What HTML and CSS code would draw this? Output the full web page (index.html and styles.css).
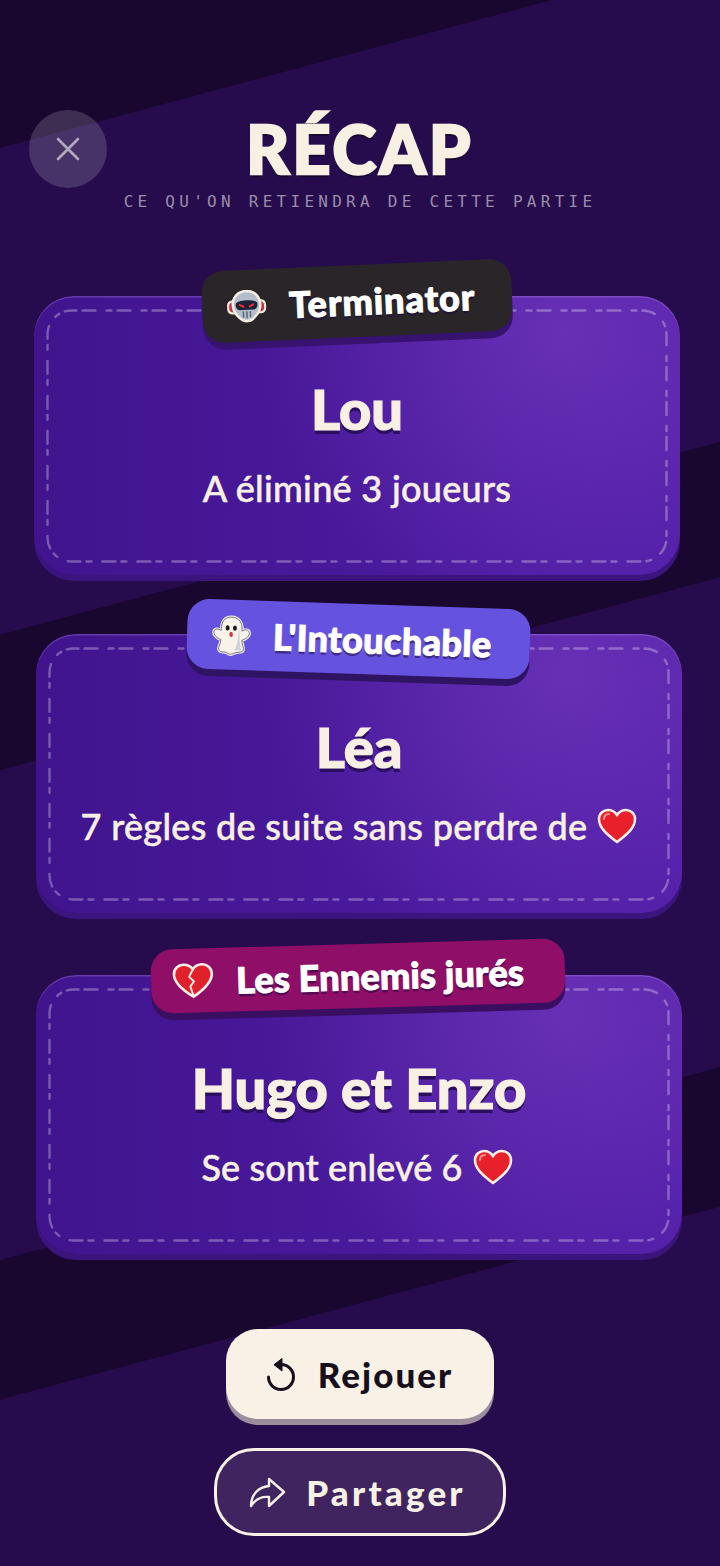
FILE: index.html
```html
<!DOCTYPE html>
<html lang="fr">
<head>
    <meta charset="UTF-8">
    <meta name="viewport" content="width=device-width, initial-scale=1.0">
    <title>Récap</title>
    <link rel="stylesheet" href="styles.css">
</head>
<body>
    <div class="page">
        <header class="recap-header">
            <button class="close-btn" aria-label="Fermer">
                <svg width="24" height="24" viewBox="0 0 24 24"><path d="M2 2 22 22M22 2 2 22" fill="none" stroke="#b3a8bd" stroke-width="2.6" stroke-linecap="round"/></svg>
            </button>
            <h1>RÉCAP</h1>
            <p class="subtitle">CE QU'ON RETIENDRA DE CETTE PARTIE</p>
        </header>

        <main class="cards">
            <!-- Terminator -->
            <section class="card card-first">
                <svg class="stitches" width="622" height="254" viewBox="0 0 622 254"><rect x="1.5" y="1.5" width="619" height="251" rx="24" /></svg>
                <div class="pill pill-dark">
                    <svg class="sticker" width="41" height="33" viewBox="0 0 41 33">
                        <rect x="1" y="10" width="39" height="14" rx="5" fill="#f7efe2"/>
                        <rect x="3" y="12" width="35" height="10" rx="4" fill="#c5323f"/>
                        <path d="M20.5 0C11 0 5.5 7 5.5 15c0 7 4 11 8 15 3 3.5 11 3.5 14 0 4-4 8-8 8-15C35.5 7 30 0 20.5 0Z" fill="#f7efe2"/>
                        <path d="M20.5 2.5C13 2.5 8 8 8 15c0 6 3.5 10 7 13 2.5 2.5 8.5 2.5 11 0 3.5-3 7-7 7-13 0-7-5-12.5-12.5-12.5Z" fill="#b4bdcc"/>
                        <path d="M10 13c3-3.5 18-3.5 21 0 1 3 0 6-3 7H13c-3-1-4-4-3-7Z" fill="#1c2338"/>
                        <path d="M13 13.5l5.5 2.5-1 2-4.500-2.500ZM28 13.5l-5.5 2.5 1 2 4.5-2.5Z" fill="#ef2b3c"/>
                        <path d="M17 22v5M20.5 22v6M24 22v5" stroke="#5e6779" stroke-width="1.5" stroke-linecap="round"/>
                    </svg>
                    <span>Terminator</span>
                </div>
                <h2 class="name">Lou</h2>
                <p class="detail">A éliminé 3 joueurs</p>
            </section>

            <!-- L'Intouchable -->
            <section class="card">
                <svg class="stitches" width="622" height="254" viewBox="0 0 622 254"><rect x="1.5" y="1.5" width="619" height="251" rx="24" /></svg>
                <div class="pill pill-blue">
                    <svg class="sticker" width="40" height="43" viewBox="0 0 44 46">
                        <path d="M22 3C14 3 11 9 11 16v2c-3-2-7-2-8 1-1 4 4 8 8 9 0 5-3 8-2 11 1 4 6 2 8 3 2 1 3 2 5 2s4-2 6-2c3-1 7 0 8-3 1-3-2-6-2-11 4-1 9-5 8-9-1-3-5-3-8-1v-2C34 9 30 3 22 3Z" fill="#f8f3e8" stroke="#f8f3e8" stroke-width="3.4" stroke-linejoin="round"/>
                        <path d="M22 3C14 3 11 9 11 16v2c-3-2-7-2-8 1-1 4 4 8 8 9 0 5-3 8-2 11 1 4 6 2 8 3 2 1 3 2 5 2s4-2 6-2c3-1 7 0 8-3 1-3-2-6-2-11 4-1 9-5 8-9-1-3-5-3-8-1v-2C34 9 30 3 22 3Z" fill="#f8f3e8" stroke="#6d6a80" stroke-width="1"/>
                        <path d="M30 14c2 8 1 18 4 25-3 1-6 0-8 1 4-7 4-18 4-26Z" fill="#cfd2df"/>
                        <ellipse cx="18" cy="15" rx="2.2" ry="3" fill="#1d1a26"/>
                        <ellipse cx="26" cy="15" rx="2.2" ry="3" fill="#1d1a26"/>
                        <ellipse cx="22" cy="22" rx="2" ry="3" fill="#d9343f"/>
                    </svg>
                    <span>L'Intouchable</span>
                </div>
                <h2 class="name">Léa</h2>
                <p class="detail">7 règles de suite sans perdre de
                    <svg class="heart" width="40" height="36" viewBox="0 0 40 36"><path d="M20 34C8 25 2 19 2 11 2 5 7 2 11 2c4 0 7 2 9 5 2-3 5-5 9-5 4 0 9 3 9 9 0 8-6 14-18 23Z" fill="#e8202c" stroke="#fbeee6" stroke-width="2.5"/><path d="M7 11c0-3 2-5 5-5" fill="none" stroke="#ff8d8d" stroke-width="2" stroke-linecap="round"/></svg>
                </p>
            </section>

            <!-- Les Ennemis jures -->
            <section class="card">
                <svg class="stitches" width="622" height="254" viewBox="0 0 622 254"><rect x="1.5" y="1.5" width="619" height="251" rx="24" /></svg>
                <div class="pill pill-red">
                    <svg class="sticker" width="42" height="36" viewBox="0 0 44 38">
                        <path d="M22 36C8 27 2 20 2 12 2 6 7 2 12 2c4 0 8 2 10 5 2-3 6-5 10-5 5 0 10 4 10 10 0 8-6 15-20 24Z" fill="#e0202b" stroke="#fbeee6" stroke-width="2.8"/>
                        <path d="M22 7l-4 8 5 5-4 5 3 10" fill="none" stroke="#fbeee6" stroke-width="2" stroke-linejoin="round"/>
                    </svg>
                    <span>Les Ennemis jurés</span>
                </div>
                <h2 class="name">Hugo et Enzo</h2>
                <p class="detail detail-short">Se sont enlevé 6
                    <svg class="heart" width="40" height="36" viewBox="0 0 40 36"><path d="M20 34C8 25 2 19 2 11 2 5 7 2 11 2c4 0 7 2 9 5 2-3 5-5 9-5 4 0 9 3 9 9 0 8-6 14-18 23Z" fill="#e8202c" stroke="#fbeee6" stroke-width="2.5"/><path d="M7 11c0-3 2-5 5-5" fill="none" stroke="#ff8d8d" stroke-width="2" stroke-linecap="round"/></svg>
                </p>
            </section>
        </main>

        <footer class="actions">
            <button class="btn btn-replay">
                <svg width="28" height="33" viewBox="0 0 28 33">
                    <path d="M14 6.5A12.5 12.5 0 1 1 1.5 19" fill="none" stroke="#17101c" stroke-width="3" stroke-linecap="round"/>
                    <path d="M15 0.5V13L7 6.7Z" fill="#17101c" stroke="#17101c" stroke-width="1" stroke-linejoin="round"/>
                </svg>
                <span>Rejouer</span>
            </button>
            <button class="btn btn-share">
                <svg width="37" height="31" viewBox="0 0 37 31"><path d="M20 2 35 15 20 29V20C12 19 6 23 2 29 2 18 9 10 20 9Z" fill="none" stroke="#f8f0e4" stroke-width="2.4" stroke-linejoin="round"/></svg>
                <span>Partager</span>
            </button>
        </footer>
    </div>
</body>
</html>
```
FILE: styles.css
```css
* {
    box-sizing: border-box;
}

html, body {
    margin: 0;
    height: 100%;
}

body {
    font-family: "Lato", "Open Sans", sans-serif;
    color: #f9f0e4;
    background: linear-gradient(165deg,
        #1a0730 143px,
        #260c4c 143px, #260c4c 613px,
        #1a0730 613px, #1a0730 744px,
        #260c4c 744px, #260c4c 1217px,
        #1a0730 1217px, #1a0730 1352px,
        #260c4c 1352px);
}

.page {
    width: 720px;
    height: 1566px;
    display: flex;
    flex-direction: column;
    align-items: center;
}

/* Header */
.recap-header {
    position: relative;
    width: 100%;
    height: 296px;
    padding-top: 110px;
    text-align: center;
}

.close-btn {
    position: absolute;
    left: 29px;
    top: 110px;
    width: 78px;
    height: 78px;
    border: 0;
    border-radius: 50%;
    background: rgba(255, 255, 255, 0.16);
    display: flex;
    align-items: center;
    justify-content: center;
}

h1 {
    margin: 0;
    font-size: 66px;
    line-height: 78px;
    font-weight: 900;
    letter-spacing: 3.3px;
    -webkit-text-stroke: 2.5px #f9f0e4;
    text-shadow: 0 3px 0 rgba(10, 4, 24, 0.6);
}

.subtitle {
    margin: 4px 0 0;
    font-family: "DejaVu Sans Mono", monospace;
    font-size: 16px;
    line-height: 20px;
    letter-spacing: 4.27px;
    color: #9a8cab;
}

/* Cards */
.cards {
    display: flex;
    flex-direction: column;
    gap: 62px;
    width: 100%;
    padding-left: 36px;
}

.card {
    position: relative;
    width: 646px;
    height: 279px;
    padding-top: 85px;
    text-align: center;
    border-radius: 40px;
    background:
        radial-gradient(circle at 82% 14%, rgba(118, 60, 192, 0.62), rgba(118, 60, 192, 0) 52%),
        linear-gradient(90deg, #41148e 0%, #4a1a9e 60%, #521ea8 100%);
    box-shadow: 0 6px 0 #3c147e, inset 0 1.5px 0 rgba(190, 150, 240, 0.3);
}

.card-first {
    margin-left: -2px;
    margin-bottom: -3px;
}

.stitches {
    position: absolute;
    left: 12px;
    top: 13px;
}

.stitches rect {
    fill: none;
    stroke: rgba(255, 255, 255, 0.3);
    stroke-width: 2.4;
    stroke-linecap: round;
    stroke-dasharray: 5 6 13 11;
}

.name {
    margin: 0;
    font-size: 56px;
    line-height: 56px;
    font-weight: 900;
    -webkit-text-stroke: 1.2px #f9f0e4;
    text-shadow: 0 4px 0 #2a0d5c;
}

.detail {
    margin: 31px 0 0;
    font-size: 36px;
    line-height: 40px;
    font-weight: 500;
    letter-spacing: 0.3px;
    -webkit-text-stroke: 0.5px #f9f0e4;
    display: flex;
    align-items: center;
    justify-content: center;
    gap: 10px;
}

.detail-short {
    letter-spacing: 0.1px;
    padding-right: 4px;
}

/* Tilted title pills */
.pill {
    position: absolute;
    left: 50%;
    display: flex;
    align-items: center;
    gap: 22px;
    padding: 0 24px;
    border-radius: 22px;
    font-size: 36px;
    font-weight: 900;
    letter-spacing: 0.4px;
    color: #ffffff;
    white-space: nowrap;
}

.pill span {
    -webkit-text-stroke: 1px #ffffff;
    text-shadow: 0 3px 0 rgba(30, 10, 60, 0.55);
}

.pill-dark {
    top: -31px;
    width: 310px;
    height: 72px;
    margin-left: -155px;
    letter-spacing: 1px;
    background: #2a2528;
    box-shadow: 0 7px 0 #37136f;
    transform: rotate(-2.5deg);
}

.pill-blue {
    top: -30px;
    width: 343px;
    height: 70px;
    margin-left: -172px;
    background: #6553e0;
    box-shadow: 0 7px 0 #2e1463;
    transform: rotate(1.9deg);
}

.pill-red {
    top: -31px;
    width: 414px;
    height: 64px;
    margin-left: -208px;
    padding-left: 21px;
    letter-spacing: 0.2px;
    background: #8f0e68;
    box-shadow: 0 7px 0 #3a0f62;
    transform: rotate(-1.6deg);
}

/* Bottom buttons */
.actions {
    display: flex;
    flex-direction: column;
    align-items: center;
    margin-top: 75px;
}

.btn {
    display: flex;
    align-items: center;
    justify-content: center;
    font-family: inherit;
    font-weight: 900;
    font-size: 35px;
}

.btn-replay {
    width: 268px;
    height: 90px;
    gap: 23px;
    border: 0;
    border-radius: 32px;
    letter-spacing: 2px;
    color: #17101c;
    background: #f9f1e5;
    box-shadow: 0 6px 0 #9c8d9d;
}

.btn-share {
    width: 292px;
    height: 88px;
    margin-top: 29px;
    gap: 20px;
    padding-right: 11px;
    border: 3px solid #f9f1e5;
    border-radius: 40px;
    letter-spacing: 3.2px;
    color: #f9f1e5;
    background: #402460;
}
```
